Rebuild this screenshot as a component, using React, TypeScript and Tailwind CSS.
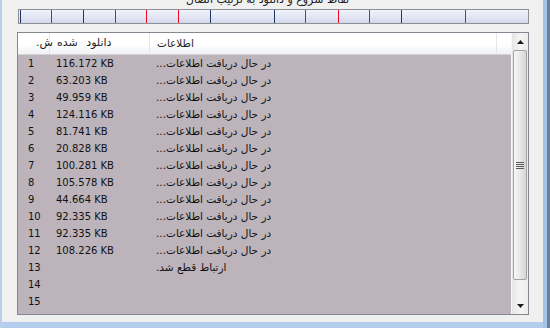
import React from "react";

const rows: [string, string, string][] = [
  ["1", "116.172 KB", "در حال دریافت اطلاعات..."],
  ["2", "63.203 KB", "در حال دریافت اطلاعات..."],
  ["3", "49.959 KB", "در حال دریافت اطلاعات..."],
  ["4", "124.116 KB", "در حال دریافت اطلاعات..."],
  ["5", "81.741 KB", "در حال دریافت اطلاعات..."],
  ["6", "20.828 KB", "در حال دریافت اطلاعات..."],
  ["7", "100.281 KB", "در حال دریافت اطلاعات..."],
  ["8", "105.578 KB", "در حال دریافت اطلاعات..."],
  ["9", "44.664 KB", "در حال دریافت اطلاعات..."],
  ["10", "92.335 KB", "در حال دریافت اطلاعات..."],
  ["11", "92.335 KB", "در حال دریافت اطلاعات..."],
  ["12", "108.226 KB", "در حال دریافت اطلاعات..."],
  ["13", "", "ارتباط قطع شد."],
  ["14", "", ""],
  ["15", "", ""],
];

const markers: [number, boolean][] = [
  [1, true],
  [32, false],
  [64, true],
  [96, false],
  [127, false],
  [159, false],
  [191, true],
  [255, true],
  [286, false],
  [319, false],
  [350, false],
  [382, true],
  [446, false],
];

function Bar() {
  return (
    <div className="ml-[16px] w-[511px] h-[15px] border border-[#8d8f93] bg-gradient-to-b from-[#f1f3fb] via-[#e3e7f5] to-[#d3d9ee]">
      <svg width="509" height="13" className="block" shapeRendering="crispEdges">
        {markers.map(([x, dark], i) => (
          <rect
            key={i}
            x={x}
            y={0}
            width={1}
            height={13}
            fill={dark ? "#1f3566" : "#f00a20"}
          />
        ))}
      </svg>
    </div>
  );
}

function Scrollbar() {
  return (
    <div className="w-[17px] h-full flex flex-col bg-gradient-to-r from-[#e6e6e6] via-[#f4f4f4] to-[#ececec] border-l border-[#f6f6f6]">
      <div className="h-[17px] flex items-center justify-center">
        <svg width="7" height="4">
          <polygon points="3.5,0 7,4 0,4" fill="#1c1c1c" />
        </svg>
      </div>
      <div className="h-[230px] mx-[1px] rounded-[2px] border border-[#a3a3a3] bg-gradient-to-r from-[#f6f6f6] via-[#e8e8e8] to-[#d6d6d6] flex items-center justify-center">
        <svg width="8" height="7">
          <rect x="0" y="0" width="8" height="1" fill="#5a5a5a" />
          <rect x="0" y="2" width="8" height="1" fill="#5a5a5a" />
          <rect x="0" y="4" width="8" height="1" fill="#5a5a5a" />
          <rect x="0" y="6" width="8" height="1" fill="#5a5a5a" />
        </svg>
      </div>
      <div className="flex-1" />
      <div className="h-[17px] flex items-center justify-center">
        <svg width="7" height="4">
          <polygon points="0,0 7,0 3.5,4" fill="#1c1c1c" />
        </svg>
      </div>
    </div>
  );
}

function List() {
  return (
    <div className="ml-[15px] mt-[8px] w-[512px] h-[283px] border border-[#828790] flex bg-white">
      <div className="flex-1 flex flex-col">
        <div className="h-[22px] flex bg-gradient-to-b from-[#ffffff] via-[#ffffff] to-[#f1f2f4] border-b border-[#d5d5d5] text-[#1e1e1e]">
          <div className="w-[32px] border-r border-[#e3e5e8] pl-[18px] flex items-center text-[11px]">
            <span dir="rtl">ش.</span>
          </div>
          <div className="w-[100px] border-r border-[#e3e5e8] pl-[7px] flex items-center text-[11px] [word-spacing:5px]">
            <span dir="rtl">دانلود شده</span>
          </div>
          <div className="w-[347px] border-r border-[#e3e5e8] pl-[7px] flex items-center text-[10.5px]">اطلاعات</div>
          <div className="flex-1" />
        </div>
        <div className="flex-1 bg-[#bdb4bb] text-[#111]">
          {rows.map(([n, size, info]) => (
            <div key={n} className="h-[17px] flex items-center">
              <div className="w-[32px] pl-[10px] text-[10px]">{n}</div>
              <div className="w-[100px] pl-[6px] text-[10px] whitespace-pre">{size}</div>
              <div className="w-[347px] pl-[6px] text-[10.5px]">
                <span dir="rtl" className="inline-block">{info}</span>
              </div>
            </div>
          ))}
        </div>
      </div>
      <Scrollbar />
    </div>
  );
}

export default function App() {
  return (
    <div
      className="w-[550px] h-[328px] flex overflow-hidden bg-[#a9c6ea]"
      style={{ fontFamily: '"DejaVu Sans", sans-serif' }}
    >
      <div className="w-[2px] bg-[#b8d0ee]" />
      <div className="w-[541px] flex flex-col">
        <div className="h-[322px] bg-[#f0f0f0] flex flex-col">
          <div className="h-[9px] overflow-hidden flex justify-center">
            <div dir="rtl" className="mr-[10px] mt-[-7px] text-[11px] leading-[13px] text-[#222] whitespace-nowrap">
              نقاط شروع و دانلود به ترتیب اتصال
            </div>
          </div>
          <Bar />
          <List />
        </div>
        <div className="flex-1 bg-[#b4cdec]" />
      </div>
      <div className="w-[4px] bg-[#a4c3ea]" />
      <div className="flex-1 bg-[#6e7f94]" />
    </div>
  );
}
